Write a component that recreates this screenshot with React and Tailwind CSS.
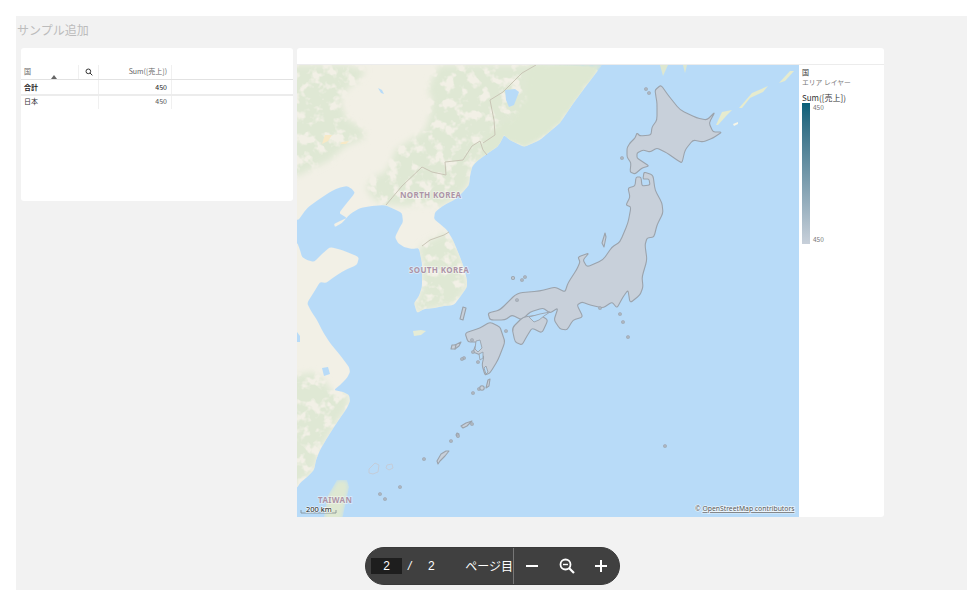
const land = "M297 65 L602 65 L583 90 L572 105 L560 123 L548 133 L540 140 L524 147 L510 140 L504 135 L500 143 L497 147 L485 155 L476 162 L472 167 L470 176 L469 185 L462 193 L454 200 L444 205 L435 212 L434 219 L440 224 L447 230 L453 240 L460 257 L464 268 L467 280 L467 287 L460 297 L454 305 L444 306 L434 308 L424 309 L417 313 L414 303 L419 296 L422 287 L422 273 L422 263 L419 248 L412 249 L404 247 L398 243 L395 237 L400 227 L403 222 L402 213 L394 209 L385 205 L372 206 L360 208 L350 214 L342 223 L335 227 L334 224 L342 220 L347 218 L339 213 L346 204 L355 193 L352 189 L347 186 L338 188 L330 192 L318 200 L307 208 L297 222 L280 200 L280 65 Z";
const land2 = "M297 242 L300 250 L302 257 L307 260 L314 262 L322 254 L330 247 L342 250 L359 257 L357 265 L345 270 L334 277 L326 283 L320 282 L314 292 L307 303 L311 311 L317 320 L323 332 L330 343 L340 355 L349 367 L350 372 L347 378 L340 385 L334 390 L343 392 L349 395 L350 401 L347 408 L340 418 L334 427 L327 438 L320 450 L316 460 L314 470 L307 477 L300 483 L297 488 L280 488 L280 242 Z";
const taiwan = "M347 480 L337 480 L327 497 L322 530 L340 530 L349 487 Z";
const forestMottled = [
"M440 65 L602 65 L583 90 L560 123 L548 133 L524 147 L510 140 L504 135 L497 147 L485 155 L472 167 L469 185 L458 197 L440 207 L430 204 L405 206 L385 205 L372 198 L366 188 L372 178 L385 172 L392 160 L395 150 L410 140 L425 130 L430 115 L432 100 L428 90 L432 78 Z",
"M280 65 L345 65 L366 70 L358 82 L348 88 L340 100 L346 118 L362 128 L366 138 L346 146 L330 160 L310 170 L280 184 Z",
"M417 313 L414 303 L419 296 L422 287 L422 263 L418 250 L425 243 L447 232 L453 240 L460 257 L464 268 L467 287 L460 297 L454 305 L434 308 Z",
"M280 378 L312 372 L322 378 L333 392 L349 395 L347 408 L334 427 L320 450 L314 470 L300 483 L280 488 Z",
];
const forestSolid = [
"M530 65 L602 65 L583 90 L560 123 L548 133 L524 147 L510 140 L504 135 L512 120 L525 100 Z",
"M490 130 L510 120 L512 140 L497 150 L478 160 Z",
taiwan,
];
const japan = [
"M661 85 L655 90 L656 97 L657 103 L657 120 L652 127 L651 135 L640 136 L637 133 L635 138 L630 143 L627 148 L627 157 L631 163 L630 172 L635 174 L642 168 L649 166 L643 162 L637 158 L637 153 L643 150 L650 152 L657 148 L667 153 L677 160 L682 163 L685 150 L693 140 L703 142 L713 138 L722 132 L713 132 L709 123 L715 112 L707 120 L697 118 L680 110 L668 95 Z",
"M636 177 L641 177 L642 186 L650 185 L649 179 L643 179 L644 172 L653 175 L655 190 L662 203 L663 213 L657 225 L654 237 L647 238 L645 245 L647 260 L642 277 L643 287 L640 295 L630 303 L628 290 L623 297 L617 308 L612 302 L603 308 L590 305 L582 302 L577 305 L583 317 L573 320 L567 330 L560 329 L554 320 L558 308 L550 313 L543 308 L530 312 L522 320 L512 315 L505 320 L490 320 L488 313 L500 310 L517 293 L540 291 L555 287 L565 292 L568 283 L577 269 L580 262 L578 257 L589 253 L583 260 L587 267 L603 260 L612 247 L620 242 L628 223 L631 207 L626 205 L630 197 L628 188 L635 186 Z",
"M512 328 L523 317 L540 315 L548 320 L542 333 L532 328 L527 336 L522 345 L515 342 Z",
"M490 322 L500 327 L502 333 L505 342 L498 360 L490 373 L485 375 L482 365 L484 356 L478 354 L473 352 L477 342 L468 342 L465 333 L480 328 Z",
"M463 307 L466 308 L463 320 L460 319 Z",
"M606 237 L605 233 L602 243 L604 247 Z",
"M455 345 L461 342 L459 346 L455 349 L453 347 Z",
"M452 345 L456 345 L455 349 L451 349 Z",
"M488 380 L490 379 L489 386 L486 388 Z",
"M466 423 L472 421 L467 426 L463 428 L461 426 Z",
"M457 433 L459 434 L458 437 L456 435 Z",
"M446 451 L449 451 L445 456 L440 461 L438 464 L437 461 L441 454 Z",
];
const dots = [[646,89],[649,93],[622,158],[517,300],[464,358],[472,340],[462,359],[478,362],[473,352],[479,389],[473,393],[472,424],[451,441],[424,459],[620,314],[623,322],[628,337],[665,446],[506,331],[600,308],[525,277],[522,280],[380,494],[385,499],[400,487],[458,436]];

function smooth(d) {
  const pts = d.replace(/[MLZ]/g, " ").trim().split(/\s+/).map(Number);
  const p = [];
  for (let i = 0; i < pts.length; i += 2) p.push([pts[i], pts[i + 1]]);
  const n = p.length;
  const lerp = (a, b, t) => [a[0] + (b[0] - a[0]) * t, a[1] + (b[1] - a[1]) * t];
  const first = lerp(p[0], p[n - 1], 0.25);
  let out = `M${first[0]} ${first[1]}`;
  for (let i = 0; i < n; i++) {
    const next = p[(i + 1) % n];
    const after = lerp(p[i], next, 0.25);
    const before = lerp(next, p[i], 0.25);
    out += ` Q${p[i][0]} ${p[i][1]} ${after[0]} ${after[1]} L${before[0]} ${before[1]}`;
  }
  return out + " Z";
}

function JapanMap() {
  return (
    <svg viewBox="297 65 502 452" className="block w-[502px] h-[452px]">
      <defs>
        <clipPath id="landclip">
          <path d={land} />
          <path d={land2} />
          <path d={taiwan} />
        </clipPath>
        <filter id="mottle" x="-5%" y="-5%" width="110%" height="110%">
          <feGaussianBlur in="SourceGraphic" stdDeviation="3" result="b" />
          <feTurbulence type="fractalNoise" baseFrequency="0.09" numOctaves="3" seed="7" result="n" />
          <feColorMatrix in="n" type="matrix" values="0 0 0 0 0  0 0 0 0 0  0 0 0 0 0  6 0 0 0 -2" result="m" />
          <feGaussianBlur in="m" stdDeviation="0.6" result="mb" />
          <feComposite in="b" in2="mb" operator="in" />
        </filter>
        <filter id="soft"><feGaussianBlur stdDeviation="2" /></filter>
        <filter id="edge"><feGaussianBlur stdDeviation="0.35" /></filter>
      </defs>
      <rect x="297" y="65" width="502" height="452" fill="#b8dbf8" />
      <g filter="url(#edge)">
        <path d={smooth(land)} fill="#f2f0e6" />
        <path d={smooth(land2)} fill="#f2f0e6" />
        <g clipPath="url(#landclip)">
          <g filter="url(#mottle)" fill="#dfe8d4">
            {forestMottled.map((d, i) => <path key={i} d={d} />)}
          </g>
          <g filter="url(#soft)" fill="#dee8d2">
            {forestSolid.map((d, i) => <path key={i} d={d} />)}
          </g>
        </g>
        <path d="M505 90 L515 89 L519 92 L514 105 L509 107 L506 100 Z" fill="#b8dbf8" />
        <path d="M378 88 L382 90 L384 94 L381 93 Z" fill="#b8dbf8" />
        <path d="M325 135 L332 135 L328 141 L322 144 Z" fill="#f8e9c6" />
        <path d="M342 142 L349 141 L346 144 L340 144 Z" fill="#f8e9c6" />
        <path d="M322 368 L328 367 L330 374 L324 376 Z" fill="#b8dbf8" />
        <path d="M297 332 L300 336 L300 342 L297 342 Z" fill="#b8dbf8" />
        <path d="M413 331 L421 330 L426 331 L421 335 L414 336 Z" fill="#e6ecd6" />
        <path d="M660 65 L668 65 L663 76 Z" fill="#dde7d0" />
        <path d="M683 65 L687 65 L685 73 Z" fill="#dde7d0" />
        <g fill="#e6ebce">
          <path d="M716 125 L722 112 L732 110 L727 115 L718 125 Z" />
          <path d="M739 108 L752 93 L768 86 L763 92 L750 98 L742 108 Z" />
          <path d="M779 83 L790 71 L794 71 L785 81 Z" />
        </g>
        <path d="M733 124 L738 122 L738 124 L734 126 Z" fill="#f7f6e8" />
        <g fill="none" stroke="#c9c5b6" strokeWidth="1">
          <path d="M386 205 L402 186 L422 167 L432 172 L446 175 L445 162 L463 160 L472 146 L480 141 L483 150 L487 155" />
          <path d="M422 246 L430 240 L444 235 L449 232" />
          <path d="M490 100 L503 92 L522 73 L536 65" />
          <path d="M490 100 L494 120 L495 135 L483 143" />
        </g>
        <g fill="#c8d0da" stroke="#9ba3ac" strokeWidth="1.1" strokeLinejoin="round">
          {japan.map((d, i) => <path key={i} d={i < 4 ? smooth(d) : d} />)}
          {dots.map(([x, y], i) => <circle key={i} cx={x} cy={y} r="1.3" />)}
          <circle cx="482" cy="388" r="2.2" />
          <circle cx="513" cy="278" r="1.5" />
        </g>
        <g fill="#b9dcf8" stroke="#9ba3ac" strokeWidth="0.9">
          <path d="M476 341 L480 340 L482 348 L478 352 L475 349 Z" />
          <path d="M479 354 L483 352 L483 358 L480 360 Z" />
          <path d="M484 368 L486 366 L488 372 L486 374 Z" />
          <path d="M550 312 L544 316 L539 320 L534 322 L529 317 L540 314 Z" />
        </g>
        <g fill="none" stroke="#c3ccd9" strokeWidth="1">
          <path d="M369 469 L375 463 L379 465 L378 472 L373 474 L369 473 Z" />
          <path d="M387 465 L392 464 L393 468 L389 470 L386 468 Z" />
        </g>
      </g>
      <g fontFamily="'Noto Sans','Liberation Sans',sans-serif" fontWeight="700" letterSpacing="0.35" fontSize="8" fill="#ac93a6" stroke="#ffffff" strokeOpacity="0.5" strokeWidth="1.4" paintOrder="stroke">
        <text x="400" y="198">NORTH KOREA</text>
        <text x="409" y="273">SOUTH KOREA</text>
        <text x="318" y="503">TAIWAN</text>
      </g>
      <path d="M301 510 L301 513 L336 513 L336 510" fill="none" stroke="#7f8a8f" strokeWidth="0.8" />
      <text x="306" y="512" fontFamily="'Noto Sans',sans-serif" fontSize="7.5" fill="#222" stroke="#fff" strokeOpacity="0.7" strokeWidth="1.5" paintOrder="stroke">200 km</text>
      <text x="695" y="511" fontFamily="'Noto Sans',sans-serif" fontSize="6.8" fill="#555" stroke="#fff" strokeOpacity="0.7" strokeWidth="1.5" paintOrder="stroke">© <tspan textDecoration="underline">OpenStreetMap contributors</tspan></text>
    </svg>
  );
}

export default function App() {
  return (
    <div className="w-[980px] h-[590px] bg-white pt-4 pl-4 overflow-hidden font-['Noto_Sans_CJK_JP','Noto_Sans',sans-serif]">
      <div className="w-[951px] h-[574px] bg-[#f2f2f2] flex flex-col">
        <div className="h-[32px] pt-[1px] pl-[1px]">
          <span className="block text-[12px] text-[#bcbcbc] leading-[26px]">サンプル追加</span>
        </div>
        <div className="flex items-start pl-[5px] gap-1">
          <div className="w-[272px] h-[153px] bg-white rounded-[3px] pt-[17px] text-[7px] text-[#333]">
            <div className="flex h-[15px] border-b border-[#e2e2e2] text-[#666]">
              <div className="w-[58px] relative pl-[3px] border-r border-[#f0f0f0] leading-[13px]">
                国
                <span className="absolute left-[30px] bottom-0 w-0 h-0 border-x-[3px] border-x-transparent border-b-[4px] border-b-[#666]" />
              </div>
              <div className="w-[20px] flex items-center justify-center border-r border-[#f0f0f0]">
                <svg viewBox="0 0 12 12" className="w-[8px] h-[8px]" fill="none" stroke="#333" strokeWidth="1.5"><circle cx="5" cy="5" r="3.5" /><path d="M7.5 7.5 L11 11" /></svg>
              </div>
              <div className="w-[73px] text-right pr-[4px] border-r border-[#f0f0f0] leading-[13px]">Sum([売上])</div>
              <div className="flex-1" />
            </div>
            <div className="flex h-[16px] border-b-2 border-[#ececec] font-bold text-[#222] leading-[14px]">
              <div className="w-[78px] pl-[3px] border-r border-[#f0f0f0]">合計</div>
              <div className="w-[73px] text-right pr-[4px] border-r border-[#f0f0f0] font-normal">450</div>
            </div>
            <div className="flex h-[13px] leading-[10px]">
              <div className="w-[78px] pl-[3px] border-r border-[#f0f0f0]">日本</div>
              <div className="w-[73px] text-right pr-[4px] border-r border-[#f0f0f0] text-[#555]">450</div>
            </div>
          </div>
          <div className="w-[587px] h-[469px] bg-white rounded-[3px] flex flex-col">
            <div className="h-[17px] border-b border-[#ececec]" />
            <div className="flex">
              <JapanMap />
              <div className="flex-1 pl-[3px] pt-[2px] text-[7px] text-[#777]">
                <div className="leading-[10px] text-[#333]">国</div>
                <div className="leading-[10px] text-[6.8px]">エリア レイヤー</div>
                <div className="mt-[5px] leading-[11px] text-[8px] text-[#333]">Sum([売上])</div>
                <div className="flex">
                  <div className="w-[8px] h-[141px] bg-gradient-to-b from-[#065f78] to-[#c8d0da]" />
                  <div className="flex flex-col justify-between pl-[3px] h-[141px] leading-[9px] text-[6.5px]">
                    <span>450</span>
                    <span>450</span>
                  </div>
                </div>
              </div>
            </div>
          </div>
        </div>
        <div className="flex mt-[30px] ml-[349px]">
          <div className="w-[255px] h-[38px] rounded-full bg-[#404040] border border-[#3a3a3a] flex items-center text-white text-[12px] pl-[5px]">
            <div className="w-[31px] h-[16px] bg-[#1e1e1e] text-center leading-[16px] font-['Liberation_Sans',sans-serif]">2</div>
            <span className="ml-[6px] w-[20px] font-['Liberation_Sans',sans-serif] italic">/</span>
            <span className="w-[37px] font-['Liberation_Sans',sans-serif]">2</span>
            <span className="w-[48px] text-right whitespace-nowrap">ページ目</span>
            <div className="w-px h-full bg-[#777]" />
            <div className="flex items-center pl-[10px]">
              <svg viewBox="0 0 16 16" className="w-[16px] h-[16px]" fill="none" stroke="white" strokeWidth="2"><path d="M2 8 H14" /></svg>
              <svg viewBox="0 0 18 18" className="ml-[18px] w-[18px] h-[18px]" fill="none" stroke="white" strokeWidth="1.8"><circle cx="7.5" cy="7.5" r="5" /><path d="M11 11 L16 16" strokeWidth="2.2" /><path d="M5 7.5 H10" strokeWidth="1.4" /></svg>
              <svg viewBox="0 0 16 16" className="ml-[17px] w-[16px] h-[16px]" fill="none" stroke="white" strokeWidth="2"><path d="M2 8 H14 M8 2 V14" /></svg>
            </div>
          </div>
        </div>
      </div>
    </div>
  );
}
